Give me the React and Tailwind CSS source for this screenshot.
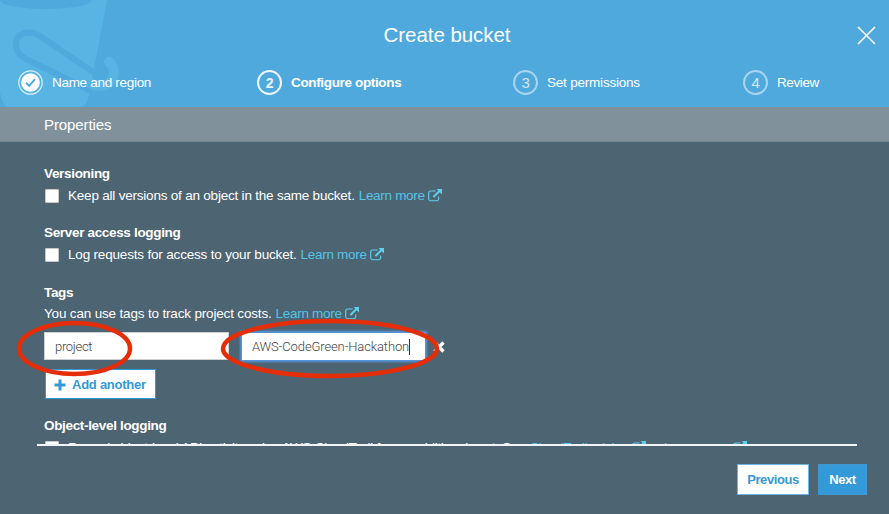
import React from "react";

function ExternalIcon() {
  return (
    <svg width="14" height="13" viewBox="0 0 14 13" className="mb-[2px] ml-[3px] shrink-0 text-[#5fd0ee]" fill="none">
      <path d="M7.6 2H2.6Q.7 2 .7 3.9V9.8Q.7 11.7 2.6 11.7H8.8Q10.7 11.7 10.7 9.8V7.4" stroke="currentColor" strokeWidth="1.15" />
      <path d="M5.4 8L11.8 1.8" stroke="currentColor" strokeWidth="2" />
      <path d="M8.6 0H14V5.4Z" fill="currentColor" />
    </svg>
  );
}

function Link({ children }) {
  return (
    <a className="ml-1 flex items-center tracking-[-0.3px] text-[#55c3e6]">
      <span>{children}</span>
      <ExternalIcon />
    </a>
  );
}

function CheckBox() {
  return <span className="mr-[9px] size-[14px] shrink-0 rounded-[1px] border border-[#c9c9c9] bg-white" />;
}

function Heading({ children }) {
  return <h2 className="pt-px font-bold leading-[17px] tracking-[-0.33px]">{children}</h2>;
}

function StepCircle({ n, active }) {
  return (
    <span
      className={
        active
          ? "flex size-[25px] items-center justify-center rounded-full border-2 border-white/90 pt-px text-[14px] font-bold text-white/90"
          : "flex size-[25px] items-center justify-center rounded-full border-2 border-white/50 pt-px text-[15px] text-white/75"
      }
    >
      {n}
    </span>
  );
}

function BucketArt() {
  return (
    <svg className="absolute left-0 top-0" width="125" height="107" viewBox="0 0 125 107" fill="none">
      <path d="M0 0H107L89 95Q87 107 80 107H8Q3 107 0 92Z" fill="#58b4e3" />
      <path d="M0 0H92Q92 8 44 9Q2 8 0 0Z" fill="#4fa9dd" />
      <path d="M97 73Q93 72 90 70L40 36C30 29 15 33 16 45C16 52 20 55 26 59L91 91" stroke="#4fa9dd" strokeWidth="6" />
      <path d="M109 62C118 69 114 86 100 86Q94 86 90 83" stroke="#58b4e3" strokeWidth="10" strokeLinecap="round" />
    </svg>
  );
}

export default function App() {
  return (
    <div className="relative flex h-[514px] w-[889px] flex-col overflow-hidden bg-[#4d6472] font-['Liberation_Sans',Arial,sans-serif] text-[13.5px] leading-[18px] tracking-[-0.21px] text-white">
      <header className="relative h-[107px] shrink-0 bg-[#4fa9dd]">
        <BucketArt />
        <div className="relative flex h-[70px] items-center justify-center pl-[5px]">
          <h1 className="pb-px text-[20.5px] leading-6 tracking-[-0.05px]">Create bucket</h1>
          <svg className="absolute right-[13px] top-[26px]" width="19" height="19" viewBox="0 0 19 19">
            <path d="M1 1L18 18M18 1L1 18" stroke="white" strokeWidth="1.6" />
          </svg>
        </div>
        <nav className="relative flex h-[25px] items-center pl-[18px]">
          <div className="flex w-[239px] items-center gap-[9px]">
            <svg width="25" height="25" viewBox="0 0 25 25" fill="none">
              <circle cx="12.5" cy="12.5" r="11.7" stroke="white" strokeOpacity=".8" strokeWidth="1.2" />
              <circle cx="12.5" cy="12.5" r="9.3" fill="white" />
              <path d="M8 12.7L11.2 15.8L17 9.2" stroke="#4fa9dd" strokeWidth="1.9" />
            </svg>
            <span className="pt-px tracking-[-0.3px]">Name and region</span>
          </div>
          <div className="flex w-[256px] items-center gap-[9px]">
            <StepCircle n={2} active />
            <span className="pt-px font-bold tracking-[-0.35px]">Configure options</span>
          </div>
          <div className="flex w-[230px] items-center gap-[9px]">
            <StepCircle n={3} />
            <span className="pt-px">Set permissions</span>
          </div>
          <div className="flex items-center gap-[9px]">
            <StepCircle n={4} />
            <span className="pt-px tracking-[-0.4px]">Review</span>
          </div>
        </nav>
      </header>

      <div className="flex h-[35px] shrink-0 items-center border-b border-[#748792] bg-[#80919c] pl-11 pt-[2px] text-[15px] tracking-[-0.1px]">
        Properties
      </div>

      <main className="h-[302px] shrink-0 overflow-hidden pl-[44px] pt-[22px]">
        <section className="h-[59px]">
          <Heading>Versioning</Heading>
          <label className="mt-[5px] flex items-center pl-px">
            <CheckBox />
            <span>Keep all versions of an object in the same bucket.</span>
            <Link>Learn more</Link>
          </label>
        </section>
        <section className="h-[60px]">
          <Heading>Server access logging</Heading>
          <label className="mt-[5px] flex items-center pl-px">
            <CheckBox />
            <span className="tracking-[-0.18px]">Log requests for access to your bucket.</span>
            <Link>Learn more</Link>
          </label>
        </section>
        <section className="h-[133px]">
          <Heading>Tags</Heading>
          <p className="mt-[4px] flex items-center">
            <span className="tracking-[-0.17px]">You can use tags to track project costs.</span>
            <Link>Learn more</Link>
          </p>
          <div className="mt-[9px] flex h-[28px] items-center whitespace-nowrap font-['Roboto',sans-serif] text-[13px] font-light tracking-normal">
            <div className="flex h-[28px] w-[185px] items-center border border-[#ccd0d2] bg-white pl-[10px] pt-px text-[#444]">
              <span className="tracking-[-0.3px]">project</span>
            </div>
            <div className="ml-[13px] flex h-[27px] w-[183px] items-center bg-white pl-[10px] pt-px text-[#444] shadow-[0_0_2px_2px_#5698e0]">
              <span className="tracking-[-0.12px]">AWS-CodeGreen-Hackathon</span>
              <span className="h-4 w-px bg-[#333]" />
            </div>
            <svg className="ml-[8px] mt-px" width="12" height="12" viewBox="0 0 12 12">
              <path d="M1.5 1.5L10.5 10.5M10.5 1.5L1.5 10.5" stroke="white" strokeWidth="3.2" />
            </svg>
          </div>
          <button className="ml-px mt-[9px] flex h-[30px] w-[111px] items-center border border-[#3499d9] bg-white pl-[8px] pt-px text-[13px] font-bold tracking-[-0.25px] text-[#3499d9]">
            <svg className="mr-[6px]" width="12" height="12" viewBox="0 0 12 12">
              <path d="M6 .5V11.5M.5 6H11.5" stroke="currentColor" strokeWidth="3" />
            </svg>
            Add another
          </button>
        </section>
        <section className="whitespace-nowrap">
          <Heading>Object-level logging</Heading>
          <div className="mt-[7px] flex items-start pl-px leading-[16px]">
            <CheckBox />
            <div className="-mt-px flex items-center tracking-[-0.27px]">
              <span>Record object-level API activity using AWS CloudTrail for an additional cost. See</span>
              <Link>CloudTrail pricing</Link>
              <span className="ml-[3px]">or</span>
              <Link>Learn more</Link>
            </div>
          </div>
        </section>
      </main>

      <div className="ml-[37px] h-[2px] w-[820px] shrink-0 bg-[#f0f4f6]" />

      <footer className="mt-[18px] flex h-[31px] justify-end gap-[9px] pr-[22px] text-[13px] font-bold tracking-[-0.4px]">
        <button className="flex w-[72px] items-center justify-center border border-[#6cb6e5] bg-white pt-px text-[#3499d9]">Previous</button>
        <button className="flex w-[49px] items-center justify-center border border-[#4098cf] bg-[#3499d9] pt-px text-white">Next</button>
      </footer>

      <svg className="pointer-events-none absolute left-0 top-0" width="889" height="514" viewBox="0 0 889 514" fill="none">
        <ellipse cx="74.5" cy="348.5" rx="55.5" ry="25.5" stroke="#e52d08" strokeWidth="4.5" />
        <ellipse cx="330" cy="348.5" rx="107" ry="27.5" stroke="#e52d08" strokeWidth="4.5" />
      </svg>
    </div>
  );
}
